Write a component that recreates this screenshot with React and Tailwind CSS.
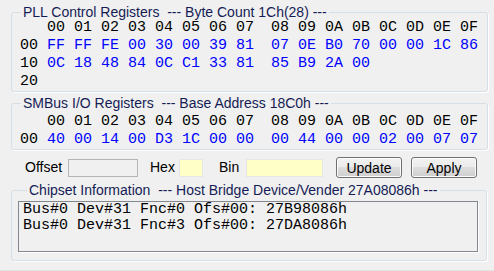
import React from 'react';

const mono = { fontFamily: '"Liberation Mono", "Courier New", monospace' };

function Group({ title, className = '', children }) {
  return (
    <fieldset className={`border border-[#d5dfe5] rounded-[3px] shadow-[1px_1px_0_#ffffff] ${className}`}>
      <legend className="ml-[9px] px-[2px] text-[14px] leading-[14px] text-[#151c55] whitespace-pre">{title}</legend>
      {children}
    </fieldset>
  );
}

const cols = ['00', '01', '02', '03', '04', '05', '06', '07', '08', '09', '0A', '0B', '0C', '0D', '0E', '0F'];

function Row({ label, values, labelClass = 'text-black', valueClass = 'text-[#0000ff]' }) {
  return (
    <div className="flex h-[18px] items-center">
      <span className={`w-[27px] shrink-0 ${labelClass}`}>{label}</span>
      {values.map((v, i) => (
        <span key={i} className={`w-[27px] shrink-0 ${i === 8 ? 'ml-[8px]' : ''} ${valueClass}`}>
          {v}
        </span>
      ))}
    </div>
  );
}

function HexTable({ rows, className = '' }) {
  return (
    <div className={`pl-[8px] text-[15px] leading-[18px] ${className}`} style={mono}>
      <Row label="" values={cols} valueClass="text-black" />
      {rows.map(([label, values]) => (
        <Row key={label} label={label} values={values ? values.split(' ') : []} />
      ))}
    </div>
  );
}

const btn =
  'w-[66px] h-[21px] rounded-[3px] border border-[#707070] bg-[linear-gradient(#f2f2f2_0%,#ebebeb_50%,#dddddd_50%,#cfcfcf_100%)] shadow-[inset_0_0_0_1px_#fcfcfc] text-[14px] leading-none text-black';

export default function App() {
  return (
    <div
      className="w-[494px] h-[271px] bg-[#f0f0f0] overflow-hidden pl-[11px] pr-[7px] pt-[5px] flex flex-col border-b border-[#e3e3e3]"
      style={{ fontFamily: '"Liberation Sans", Arial, sans-serif' }}
    >
      {/* PLL */}
      <Group title="PLL Control Registers  --- Byte Count 1Ch(28) ---">
        <HexTable
          rows={[
            ['00', 'FF FF FE 00 30 00 39 81 07 0E B0 70 00 00 1C 86'],
            ['10', '0C 18 48 84 0C C1 33 81 85 B9 2A 00'],
            ['20', ''],
          ]}
        />
      </Group>

      {/* SMBus */}
      <Group title="SMBus I/O Registers  --- Base Address 18C0h ---" className="mt-[4px]">
        <HexTable className="mt-[3px]" rows={[['00', '40 00 14 00 D3 1C 00 00 00 44 00 00 02 00 07 07']]} />
      </Group>

      {/* Controls */}
      <div className="flex items-center h-[21px] mt-[7px] text-[14px] text-black">
        <span className="ml-[14px] w-[43px]">Offset</span>
        <div className="w-[70px] h-[18px] bg-[#f0f0f0] border border-[#b5b5b5]" />
        <span className="ml-[12px] w-[29px]">Hex</span>
        <div className="w-[24px] h-[18px] bg-[#ffffc8] border border-[#e6e6e6]" />
        <span className="ml-[16px] w-[27px]">Bin</span>
        <div className="w-[77px] h-[18px] bg-[#ffffc8] border border-[#e6e6e6]" />
        <button className={`ml-[13px] ${btn}`}>Update</button>
        <button className={`ml-[9px] ${btn}`}>Apply</button>
      </div>

      {/* Chipset */}
      <Group
        title="Chipset Information  --- Host Bridge Device/Vender 27A08086h ---"
        className="mt-[5px] pl-[6px] pr-[8px] pb-[8px]"
      >
        <div
          className="mt-[4px] h-[51px] border border-[#828790] shadow-[1px_1px_0_#ffffff] pl-[4px] text-[15px] leading-[16px] text-black whitespace-pre"
          style={mono}
        >
          <div>Bus#0 Dev#31 Fnc#0 Ofs#00: 27B98086h</div>
          <div>Bus#0 Dev#31 Fnc#3 Ofs#00: 27DA8086h</div>
        </div>
      </Group>
    </div>
  );
}
